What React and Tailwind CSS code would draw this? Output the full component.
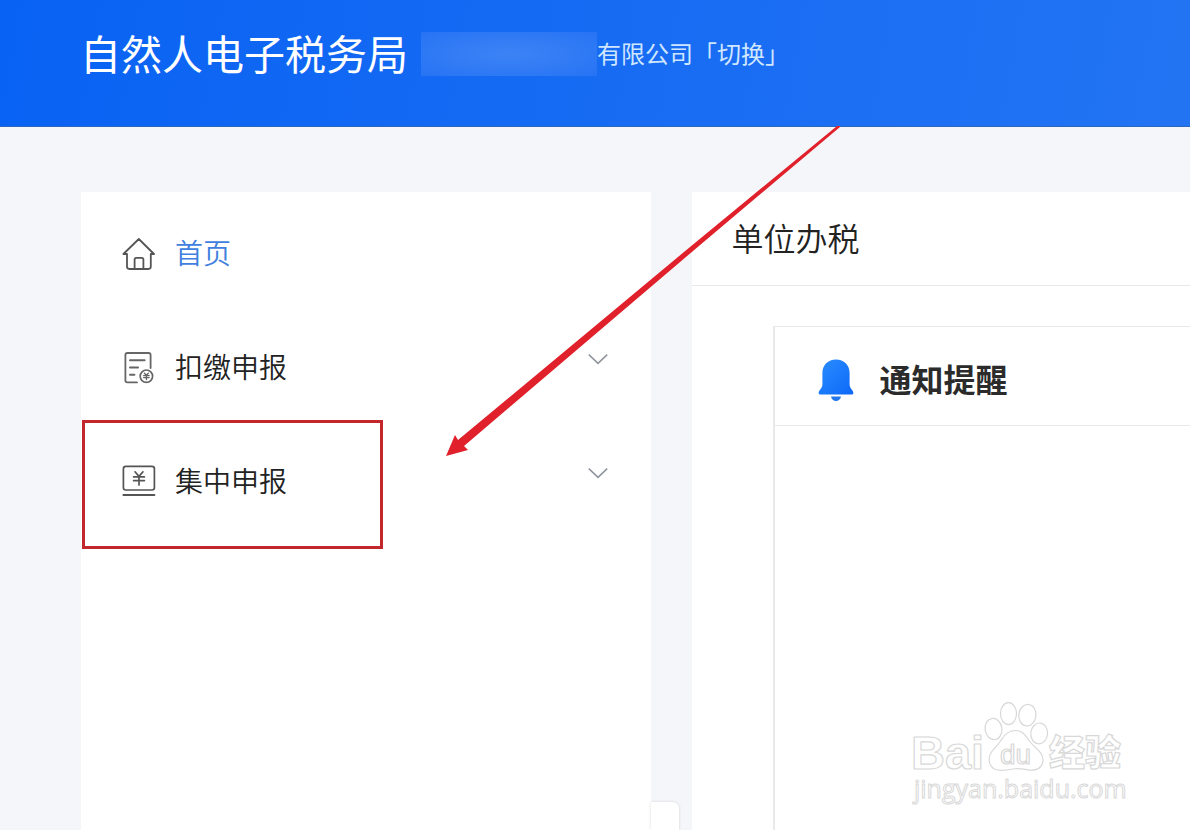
import { useState } from 'react';

const HomeIcon = () => (
  <svg className="w-9 h-9" viewBox="0 0 36 36" fill="none" stroke="#555" strokeWidth="1.8" strokeLinejoin="round" strokeLinecap="round">
    <path d="M2.4 19 17.8 4 33 19H29.8V31.6Q29.8 34 27.4 34H8.4Q6 34 6 31.6V19Z" />
    <path d="M13.6 33.8V24.4Q13.6 22.8 15.2 22.8H20.8Q22.4 22.8 22.4 24.4V33.8" />
  </svg>
);

const ReportIcon = () => (
  <svg className="w-9 h-9" viewBox="0 0 36 36" fill="none" stroke="#666" strokeWidth="1.8" strokeLinecap="round">
    <path d="M16 33.4H6.4Q4.4 33.4 4.4 31.4V6Q4.4 4 6.4 4H27.6Q29.6 4 29.6 6V19" />
    <path d="M9 11.2H23.6M9 18.4H17M9 25.8H13.4" strokeWidth="2" />
    <circle cx="25.4" cy="27.2" r="6.2" strokeWidth="1.7" />
    <path d="M23.4 24.2 25.4 26.2 27.4 24.2M25.4 26.2V30.6M22.6 26.6H28.2M22.6 28.6H28.2" strokeWidth="1.4" />
  </svg>
);

const CollectIcon = () => (
  <svg className="w-9 h-9" viewBox="0 0 36 36" fill="none" stroke="#555" strokeWidth="1.7" strokeLinecap="round">
    <rect x="2.4" y="3.4" width="31" height="23.6" rx="2.4" />
    <path d="M2.4 32H33.4" strokeWidth="1.9" />
    <path d="M14 8.8 18 13.4 22 8.8M18 13.4V22M12.6 13.8H23.4M12.6 17.6H23.4" />
  </svg>
);

const BellIcon = () => (
  <svg className="w-9 h-[42px]" viewBox="0 0 36 42">
    <defs>
      <linearGradient id="bell" x1="0" y1="0" x2="1" y2="1">
        <stop offset="0" stopColor="#2a8dff" />
        <stop offset="1" stopColor="#0d68f8" />
      </linearGradient>
    </defs>
    <path fill="url(#bell)" d="M18 .5C26 .5 31.6 6 31.6 14V25.5C31.6 29.5 35.4 31 35.4 34Q35.4 35.5 33.6 35.5H2.4Q.6 35.5 .6 34C.6 31 4.4 29.5 4.4 25.5V14C4.4 6 10 .5 18 .5Z" />
    <path fill="#2377e8" d="M13 37.6H23Q22 42 18 42T13 37.6Z" />
  </svg>
);

const ChevronIcon = () => (
  <svg className="w-5 h-5 mb-4" viewBox="0 0 20 20" fill="none" stroke="#8f959b" strokeWidth="1.5">
    <path d="M.8 5.6 10 14.4 19.2 5.6" />
  </svg>
);

const menus = [
  { key: 'home', label: '首页', icon: HomeIcon },
  { key: 'withhold', label: '扣缴申报', icon: ReportIcon, hasChild: true },
  { key: 'collect', label: '集中申报', icon: CollectIcon, hasChild: true, marked: true },
];

function Header() {
  return (
    <header className="h-[127px] pl-20 pb-[18px] flex items-center bg-linear-100 from-[#0862f3] to-[#2274f3] border-b border-[#2b68bd]">
      <h1 className="pb-1 text-[41px] leading-none text-white whitespace-nowrap">自然人电子税务局</h1>
      {/* nama perusahaan disamarkan */}
      <span className="ml-[13px] w-44 h-11 shrink-0 bg-radial from-[#3c83f5] to-[#2673f4]"></span>
      <div className="pb-0.5 text-2xl text-[#cfe6ff] whitespace-nowrap">
        有限公司<button type="button" className="cursor-pointer">「切换」</button>
      </div>
    </header>
  );
}

function Sidebar() {
  const [active, setActive] = useState('home');

  return (
    <aside className="relative bg-white pt-1">
      <nav>
        <ul>
          {menus.map(({ key, label, icon: Icon, hasChild, marked }) => (
            <li key={key} className="relative">
              <button
                type="button"
                onClick={() => setActive(key)}
                className="w-full h-[114px] pl-10 pr-[43px] flex items-center text-left cursor-pointer"
              >
                <Icon />
                <span className={`ml-[18px] pb-0.5 flex-1 text-[28px] font-[350] ${active === key ? 'text-[#3f7fe0]' : 'text-[#222]'}`}>{label}</span>
                {hasChild && <ChevronIcon />}
              </button>
              {marked && <div className="absolute left-px -top-1 w-[301px] h-[129px] border-3 border-[#c1272d] pointer-events-none"></div>}
            </li>
          ))}
        </ul>
      </nav>
      <div className="absolute left-full bottom-0 w-7 h-7 bg-white rounded-tr-md shadow-[0_0_3px_rgba(0,0,0,0.15)]"></div>
    </aside>
  );
}

function Content() {
  return (
    <section className="bg-white flex flex-col">
      <h2 className="h-[94px] pl-10 pb-1 flex items-center text-[32px] font-[350] text-[#222] border-b border-[#e6e8ea]">单位办税</h2>
      <div className="flex-1 mt-10 ml-[81px] border-l-2 border-t border-[#e8e9eb]">
        <div className="h-[99px] pl-[43px] pt-2 flex items-center border-b border-[#e8e9eb]">
          <BellIcon />
          <h3 className="ml-[26px] pb-1 text-[32px] font-bold text-[#2b2b2b]">通知提醒</h3>
        </div>
      </div>
    </section>
  );
}

const Arrow = () => (
  <svg className="absolute left-[446px] top-[126px] w-[394px] h-[331px] pointer-events-none" viewBox="446 126 394 331">
    <path fill="#e0202a" d="M837 126H840L840 127 693 251 464 446 468 450 446 456 455 435 458 440 690 247Z" />
  </svg>
);

const Watermark = () => (
  <svg className="absolute right-[54px] bottom-2 w-[226px] h-[124px] pointer-events-none" viewBox="910 698 226 124" fill="#fff" stroke="#d8d8d8" strokeWidth="1.2" strokeLinejoin="round">
    <text x="911" y="769" fontSize="47" fontWeight="700" fontFamily="Liberation Sans, sans-serif">Bai</text>
    <ellipse cx="993.5" cy="729" rx="8.4" ry="10.6" transform="rotate(-8 993.5 729)" />
    <ellipse cx="1008.5" cy="713.6" rx="8" ry="11" />
    <ellipse cx="1027.4" cy="715.2" rx="8.6" ry="10.8" transform="rotate(8 1027.4 715.2)" />
    <ellipse cx="1039.2" cy="733.4" rx="8.4" ry="10.4" transform="rotate(6 1039.2 733.4)" />
    <path d="M1015.5 730.5C1024 730.5 1027 738 1031 743C1036 749 1043 752 1043 760C1043 768 1036 771 1029 770C1023 769 1019 768 1013 769C1006 770.5 1000 771.5 994.5 769C988 765.5 988 757 991.5 752C995 747 999 744 1002 739C1005 734 1009 730.5 1015.5 730.5Z" />
    <text x="1000" y="764" fontSize="28" fontFamily="Liberation Sans, sans-serif">du</text>
    <text x="1049" y="766" fontSize="36" fontWeight="900" fontFamily="Noto Sans CJK SC, sans-serif">经验</text>
    <text x="914" y="798" fontSize="25" strokeWidth="1" fontFamily="Open Sans, sans-serif">jingyan.baidu.com</text>
  </svg>
);

export default function App() {
  return (
    <div className="relative min-h-screen flex flex-col bg-[#f4f6fa] font-['Noto_Sans_CJK_SC',sans-serif] overflow-hidden">
      <Header />
      <main className="flex-1 pt-[65px] pl-[81px] grid grid-cols-[8fr_7fr] gap-[41px]">
        <Sidebar />
        <Content />
      </main>
      <Arrow />
      <Watermark />
    </div>
  );
}
